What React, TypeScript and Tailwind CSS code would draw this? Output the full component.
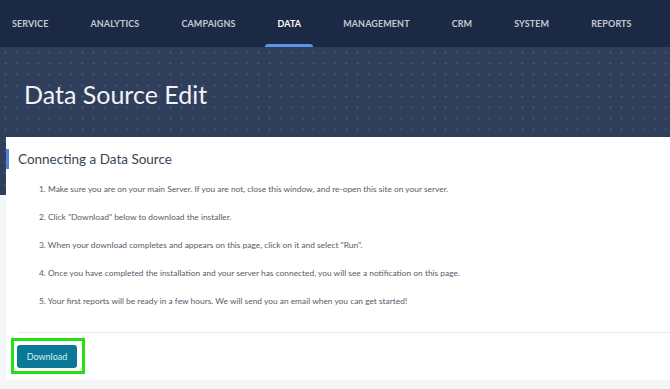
import React from "react";

const navItems = [
  "SERVICE",
  "ANALYTICS",
  "CAMPAIGNS",
  "DATA",
  "MANAGEMENT",
  "CRM",
  "SYSTEM",
  "REPORTS",
];

const steps = [
  "1. Make sure you are on your main Server. If you are not, close this window, and re-open this site on your server.",
  '2. Click "Download" below to download the installer.',
  '3. When your download completes and appears on this page, click on it and select "Run".',
  "4. Once you have completed the installation and your server has connected, you will see a notification on this page.",
  "5. Your first reports will be ready in a few hours. We will send you an email when you can get started!",
];

export default function App() {
  return (
    <div
      className="h-[389px] w-[670px] overflow-hidden bg-[#f5f6f7]"
      style={{ fontFamily: "Lato, 'Open Sans', sans-serif" }}
    >
      {/* Top nav */}
      <nav className="flex h-[47px] items-stretch gap-[18px] bg-[#1b2944]">
        {navItems.map((item) => (
          <div
            key={item}
            className={
              item === "DATA"
                ? "relative flex items-center px-[12px] text-[9px] font-bold tracking-[0.1px] text-white"
                : "relative flex items-center px-[12px] text-[9px] font-bold tracking-[0.1px] text-[#c3c9d3]"
            }
          >
            {item}
            {item === "DATA" && (
              <span className="absolute bottom-0 left-0 right-0 h-[3px] rounded-t-sm bg-[#5a95ec]" />
            )}
          </div>
        ))}
      </nav>

      {/* Hero */}
      <div className="h-[148px] bg-[#2f3e5b] bg-[radial-gradient(circle,rgba(255,255,255,0.09)_1px,transparent_1.5px)] bg-[length:11px_11px] pl-[24px] pt-[29px]">
        <h1 className="text-[25px] leading-[36px] text-[#f1f3f6]">
          Data Source Edit
        </h1>
      </div>

      {/* Card */}
      <div className="relative ml-[6px] mt-[-58px] h-[243px] bg-white">
        <div className="flex h-[44px] items-center">
          <span className="h-[20px] w-[3px] bg-[#4a86e0]" />
          <h2 className="ml-[9px] text-[13.5px] text-[#3a4454]">
            Connecting a Data Source
          </h2>
        </div>
        <ol className="flex flex-col gap-[14px] pl-[33px] pt-[1px]">
          {steps.map((s) => (
            <li key={s} className="text-[8.4px] leading-[14px] text-[#555c67]">
              {s}
            </li>
          ))}
        </ol>
        <div className="ml-[12px] mt-[24px] border-t border-[#e8e9eb]" />
        <div className="ml-[5px] mt-[5px] inline-flex border-[3px] border-[#22e012] pb-[3px] pl-[3px] pr-[5px] pt-[4px]">
          <button className="h-[23px] w-[60px] rounded-[3px] bg-[#0b7897] text-[9px] text-[#d8edf4]">
            Download
          </button>
        </div>
      </div>
    </div>
  );
}
